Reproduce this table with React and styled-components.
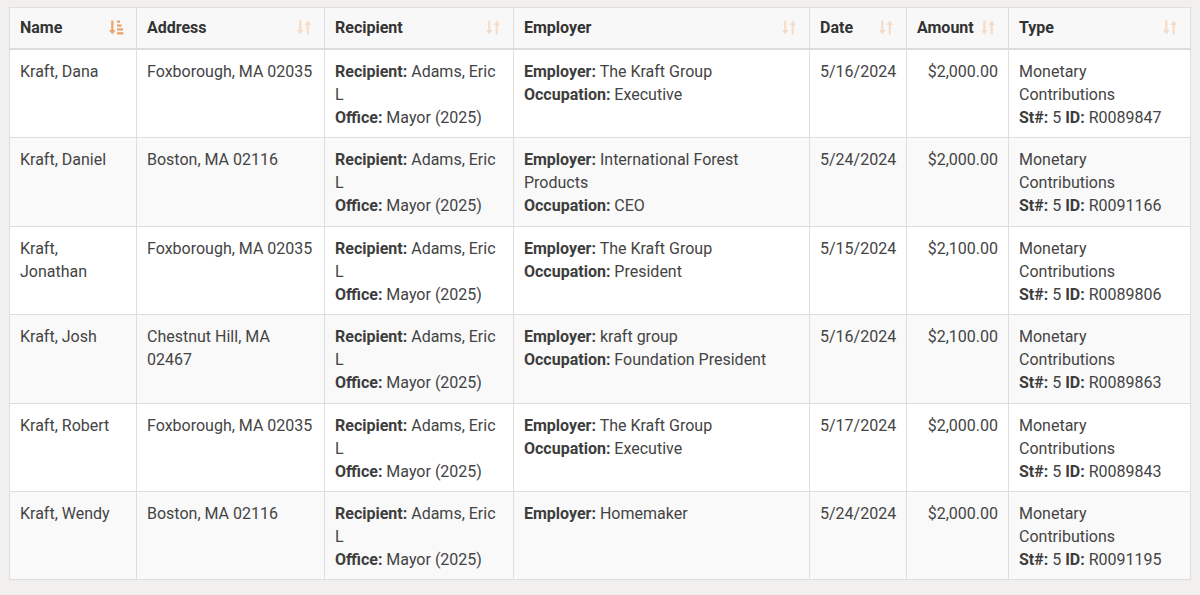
import React from 'react';
import styled, { createGlobalStyle } from 'styled-components';

const GlobalStyle = createGlobalStyle`
  body {
    margin: 0;
    background: #f1f0ef;
    font-family: Roboto, "Liberation Sans", sans-serif;
    color: #444;
  }
`;

const columns = [
  { key: 'name', label: 'Name', width: 127, active: true },
  { key: 'address', label: 'Address', width: 188 },
  { key: 'recipient', label: 'Recipient', width: 189 },
  { key: 'employer', label: 'Employer', width: 296 },
  { key: 'date', label: 'Date', width: 97 },
  { key: 'amount', label: 'Amount', width: 102 },
  { key: 'type', label: 'Type', width: 182 },
];

const rows = [
  { name: 'Kraft, Dana', address: 'Foxborough, MA 02035', employer: 'The Kraft Group', occupation: 'Executive', date: '5/16/2024', amount: '$2,000.00', id: 'R0089847' },
  { name: 'Kraft, Daniel', address: 'Boston, MA 02116', employer: 'International Forest Products', occupation: 'CEO', date: '5/24/2024', amount: '$2,000.00', id: 'R0091166' },
  { name: 'Kraft, Jonathan', address: 'Foxborough, MA 02035', employer: 'The Kraft Group', occupation: 'President', date: '5/15/2024', amount: '$2,100.00', id: 'R0089806' },
  { name: 'Kraft, Josh', address: 'Chestnut Hill, MA 02467', employer: 'kraft group', occupation: 'Foundation President', date: '5/16/2024', amount: '$2,100.00', id: 'R0089863' },
  { name: 'Kraft, Robert', address: 'Foxborough, MA 02035', employer: 'The Kraft Group', occupation: 'Executive', date: '5/17/2024', amount: '$2,000.00', id: 'R0089843' },
  { name: 'Kraft, Wendy', address: 'Boston, MA 02116', employer: 'Homemaker', date: '5/24/2024', amount: '$2,000.00', id: 'R0091195' },
];

function SortIcon({ active }) {
  if (active) {
    return (
      <Icon viewBox="0 0 16 17" $active>
        <path d="M3.2 1.5h2.2v9.5h2.2L4.3 15.5 1 11h2.2z" />
        <rect x="9" y="1.5" width="3" height="2.3" />
        <rect x="9" y="5.4" width="4.5" height="2.3" />
        <rect x="9" y="9.3" width="6" height="2.3" />
        <rect x="9" y="13.2" width="6.5" height="2.3" />
      </Icon>
    );
  }
  return (
    <Icon viewBox="0 0 16 17">
      <path d="M3.2 1.5h2.2v9.5h2.2L4.3 15.5 1 11h2.2z" />
      <path d="M10.6 15.5h2.2V6H15L11.7 1.5 8.4 6h2.2z" />
    </Icon>
  );
}

export default function App() {
  return (
    <Page>
      <GlobalStyle />
      <Table>
        <colgroup>
          {columns.map((c) => (
            <col key={c.key} style={{ width: c.width }} />
          ))}
        </colgroup>
        <thead>
          <tr>
            {columns.map((c) => (
              <Th key={c.key}>
                <HeadInner>
                  <span>{c.label}</span>
                  <SortIcon active={c.active} />
                </HeadInner>
              </Th>
            ))}
          </tr>
        </thead>
        <tbody>
          {rows.map((r) => (
            <Row key={r.name}>
              <Td>{r.name}</Td>
              <Td>{r.address}</Td>
              <Td>
                <b>Recipient:</b> Adams, Eric L<br />
                <b>Office:</b> Mayor (2025)
              </Td>
              <Td>
                <b>Employer:</b> {r.employer}
                {r.occupation && (
                  <>
                    <br />
                    <b>Occupation:</b> {r.occupation}
                  </>
                )}
              </Td>
              <Td>{r.date}</Td>
              <Td $right>{r.amount}</Td>
              <Td>
                Monetary Contributions<br />
                <b>St#:</b> 5 <b>ID:</b> {r.id}
              </Td>
            </Row>
          ))}
        </tbody>
      </Table>
    </Page>
  );
}

const Page = styled.div`
  padding: 7px 10px 16px 9px;
`;

const Table = styled.table`
  width: 1181px;
  table-layout: fixed;
  border-collapse: collapse;
  border: 1px solid #d9d9d9;
  font-size: 16px;
  line-height: 23px;
`;

const Th = styled.th`
  background: #f8f8f8;
  text-align: left;
  font-weight: 700;
  color: #333;
  padding: 8px 10px 9px 10px;
  border: 1px solid #dedede;
  border-bottom: 2px solid #dcdcdc;
`;

const HeadInner = styled.div`
  display: flex;
  align-items: center;
  justify-content: space-between;
  gap: 4px;
`;

const Icon = styled.svg`
  width: 16px;
  height: 17px;
  flex: none;
  margin-right: 2px;
  fill: ${(p) => (p.$active ? '#e9a56e' : '#f6dcc6')};
`;

const Row = styled.tr`
  background: #ffffff;
  &:nth-child(even) {
    background: #f9f9f9;
  }
`;

const Td = styled.td`
  vertical-align: top;
  padding: 10px 10px 8.4px 10px;
  border: 1px solid #dedede;
  color: #444;
  text-align: ${(p) => (p.$right ? 'right' : 'left')};

  b {
    font-weight: 700;
    color: #3d3d3d;
  }
`;
